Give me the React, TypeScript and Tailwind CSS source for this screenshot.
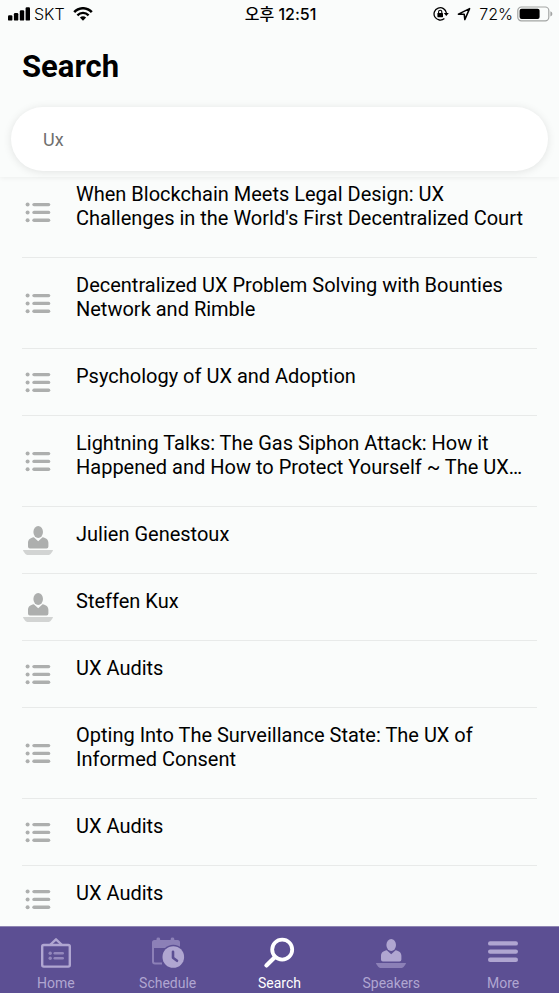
import { useState } from "react";
import type { ReactNode } from "react";

type ResultKind = "talk" | "speaker";

interface Result {
  id: number;
  kind: ResultKind;
  title: string;
}

const results: Result[] = [
  { id: 1, kind: "talk", title: "When Blockchain Meets Legal Design: UX Challenges in the World's First Decentralized Court" },
  { id: 2, kind: "talk", title: "Decentralized UX Problem Solving with Bounties Network and Rimble" },
  { id: 3, kind: "talk", title: "Psychology of UX and Adoption" },
  { id: 4, kind: "talk", title: "Lightning Talks: The Gas Siphon Attack: How it Happened and How to Protect Yourself ~ The UX…" },
  { id: 5, kind: "speaker", title: "Julien Genestoux" },
  { id: 6, kind: "speaker", title: "Steffen Kux" },
  { id: 7, kind: "talk", title: "UX Audits" },
  { id: 8, kind: "talk", title: "Opting Into The Surveillance State: The UX of Informed Consent" },
  { id: 9, kind: "talk", title: "UX Audits" },
  { id: 10, kind: "talk", title: "UX Audits" },
];

function TalkIcon() {
  return (
    <svg viewBox="0 0 32 32" className="size-8" aria-hidden="true">
      <g fill="#adafae">
        <circle cx="5.6" cy="8.6" r="2" />
        <circle cx="5.6" cy="16.4" r="2" />
        <circle cx="5.6" cy="24.2" r="2" />
        <rect x="10.3" y="6.9" width="18" height="3.4" rx="1.7" />
        <rect x="10.3" y="14.7" width="18" height="3.4" rx="1.7" />
        <rect x="10.3" y="22.5" width="18" height="3.4" rx="1.7" />
      </g>
    </svg>
  );
}

/** Speaker behind a desk, used both in the results and in the tab bar */
function SpeakerIcon({ body, desk }: { body: string; desk: string }) {
  return (
    <svg viewBox="0 0 32 32" className="size-8" aria-hidden="true">
      <ellipse cx="16.2" cy="8" rx="4.8" ry="6" fill={body} />
      <path
        d="M11.8 13.2 16.2 17.2 20.6 13.2C24 14 26.4 15.4 26.4 18.8V22.6Q26.4 24.5 24.5 24.5H7.9Q6 24.5 6 22.6V18.8C6 15.4 8.4 14 11.8 13.2Z"
        fill={body}
      />
      <path d="M1.4 26H30.6Q31.2 26 30.9 26.7L28.8 29.8Q28.1 30.9 26.8 30.9H5.2Q3.9 30.9 3.2 29.8L1.1 26.7Q.8 26 1.4 26Z" fill={desk} />
    </svg>
  );
}

function HomeIcon() {
  return (
    <svg viewBox="0 0 32 32" className="size-8" fill="none" aria-hidden="true">
      <g stroke="#b0a6d1" strokeWidth="2.4" strokeLinecap="round" strokeLinejoin="round">
        <rect x="2.2" y="8" width="27.6" height="21.6" rx="1.6" />
        <path d="M10.5 7.5 16 2.3 21.5 7.5" />
      </g>
      <g fill="#9387bc">
        <circle cx="10.2" cy="16.3" r="1.7" />
        <circle cx="10.2" cy="21.3" r="1.7" />
        <rect x="13.5" y="15" width="10.5" height="2.5" rx="1.2" />
        <rect x="13.5" y="20" width="10.5" height="2.5" rx="1.2" />
      </g>
    </svg>
  );
}

function ScheduleIcon() {
  return (
    <svg viewBox="0 0 34 32" className="h-8 w-[34px]" fill="none" aria-hidden="true">
      <path d="M1 11V5.5Q1 3 3.5 3H5.5V2Q5.5.6 7.3.6T9.1 2V3H19.7V2Q19.7.6 21.5.6T23.3 2V3H26.5Q29 3 29 5.5V11Z" fill="#8c80b7" />
      <path d="M2 10V24.5Q2 26.5 4 26.5H11" stroke="#8c80b7" strokeWidth="2" />
      <circle cx="22.3" cy="20" r="12.2" fill="#5c4f93" />
      <circle cx="22.3" cy="20" r="10.8" fill="#b0a6d1" />
      <path d="M22 14.8V20.8L26 23.8" stroke="#5c4f93" strokeWidth="2.6" strokeLinecap="round" strokeLinejoin="round" />
    </svg>
  );
}

function SearchIcon() {
  return (
    <svg viewBox="0 0 32 32" className="size-8" fill="none" stroke="#ffffff" aria-hidden="true">
      <circle cx="19.2" cy="12.6" r="10" strokeWidth="3.8" />
      <path d="M12 20.1 3.4 28.4" strokeWidth="4.2" strokeLinecap="round" />
    </svg>
  );
}

function MoreIcon() {
  return (
    <svg viewBox="0 0 32 32" className="size-8" fill="#b0a6d1" aria-hidden="true">
      <rect x="1" y="4.2" width="30" height="4.4" rx="2.2" />
      <rect x="1" y="12.4" width="30" height="4.4" rx="2.2" />
      <rect x="1" y="20.6" width="30" height="4.4" rx="2.2" />
    </svg>
  );
}

function StatusBar() {
  return (
    <div className="grid h-7 grid-cols-[1fr_auto_1fr] items-center pr-1.5 pl-2 font-['Inter','Noto_Sans_CJK_KR',sans-serif] text-base leading-none">
      <div className="flex items-center gap-1">
        <svg width="22" height="14" viewBox="0 0 22 14" aria-label="Signal">
          <rect x="0" y="8.2" width="4.4" height="5.4" rx="1.2" />
          <rect x="5.9" y="6" width="4.4" height="7.6" rx="1.2" />
          <rect x="11.8" y="3.2" width="4.4" height="10.4" rx="1.2" />
          <rect x="17.6" y="0.2" width="4.4" height="13.4" rx="1.2" />
        </svg>
        <span className="font-light">SKT</span>
        <svg width="20" height="14" viewBox="0 0 20 14" className="ml-1" fill="none" stroke="#000000" aria-label="Wi-Fi">
          <path d="M1.2 5.2C6-.1 14-.1 18.8 5.2" strokeWidth="2.5" />
          <path d="M4.4 8.4C7.6 5.1 12.4 5.1 15.6 8.4" strokeWidth="2.3" />
          <path d="M6.9 10.6Q10 8 13.1 10.6L10 13.7Z" fill="#000000" stroke="none" />
        </svg>
      </div>
      <span className="font-medium">오후 12:51</span>
      <div className="flex items-center justify-end gap-2">
        <svg width="16" height="16" viewBox="0 0 16 16" fill="none" stroke="#000000" aria-label="Rotation lock">
          <path d="M13.4 7A6.2 6.2 0 1 0 11.4 12.5" strokeWidth="1.3" />
          <path d="M10.8 6.9H15.8L13.3 9.9Z" fill="#000000" stroke="none" />
          <rect x="4.4" y="7" width="5.6" height="4.2" rx="0.6" fill="#000000" stroke="none" />
          <path d="M5.6 7V5.8A1.6 1.6 0 0 1 8.8 5.8V7" strokeWidth="1.1" />
        </svg>
        <svg width="14" height="14" viewBox="0 0 14 14" fill="none" stroke="#000000" strokeWidth="1.5" strokeLinejoin="round" aria-label="Location">
          <path d="M1.4 7.2 12.6 1.6 7.8 12.6 7.2 7.2Z" />
        </svg>
        <span className="font-light">72%</span>
        <svg width="36" height="16" viewBox="0 0 36 16" className="-ml-1" aria-label="Battery">
          <rect x="0.8" y="1" width="31" height="13.8" rx="3.6" fill="none" stroke="#a3a5a4" strokeWidth="1.2" />
          <rect x="2.6" y="2.8" width="20" height="10.2" rx="2" />
          <path d="M33.4 5.2Q35.4 6 35.4 7.9T33.4 10.6Z" fill="#a3a5a4" />
        </svg>
      </div>
    </div>
  );
}

function Tab({ label, icon, active = false }: { label: string; icon: ReactNode; active?: boolean }) {
  return (
    <a
      href={`#${label.toLowerCase()}`}
      aria-current={active ? "page" : undefined}
      className={
        active
          ? "flex flex-1 flex-col items-center text-white"
          : "flex flex-1 flex-col items-center text-[#b0a6d1]"
      }
    >
      {icon}
      <span className="mt-1 text-sm">{label}</span>
    </a>
  );
}

export default function App() {
  const [query, setQuery] = useState("Ux");

  return (
    <div className="flex h-screen flex-col bg-[#fafcfb] font-['Roboto',sans-serif] text-black">
      {/* Header stays above the scrolled results */}
      <header className="relative z-10 bg-[#fafcfb] pb-1.5 shadow-[0_1px_5px_rgba(0,0,0,0.06)]">
        <StatusBar />
        <h1 className="mt-5 px-[22px] text-[31px] leading-[38px] font-bold">Search</h1>
        <div className="mt-[21px] px-[11px]">
          <input
            type="text"
            aria-label="Search"
            value={query}
            onChange={(e) => setQuery(e.target.value)}
            className="block h-16 w-full rounded-full bg-white px-8 text-lg text-[#6f6f6f] shadow-[0_1px_8px_rgba(0,0,0,0.1)] outline-none"
          />
        </div>
      </header>

      <main className="min-h-0 flex-1 overflow-y-auto [scrollbar-width:none]">
        <ul className="-mt-2.5 px-[22px]">
          {results.map((result) => (
            <li key={result.id} className="flex items-center gap-[22px] border-b border-[#e8eae9]">
              {result.kind === "talk" ? <TalkIcon /> : <SpeakerIcon body="#adafae" desk="#d2d4d3" />}
              <p className="mt-[15px] mb-[27px] line-clamp-2 flex-1 self-start text-xl leading-6">{result.title}</p>
            </li>
          ))}
        </ul>
      </main>

      <nav className="flex h-[67px] shrink-0 border-t border-[#8f86b3] bg-[#5c4f93] pt-2.5">
        <Tab label="Home" icon={<HomeIcon />} />
        <Tab label="Schedule" icon={<ScheduleIcon />} />
        <Tab label="Search" icon={<SearchIcon />} active />
        <Tab label="Speakers" icon={<SpeakerIcon body="#b0a6d1" desk="#8c80b7" />} />
        <Tab label="More" icon={<MoreIcon />} />
      </nav>
    </div>
  );
}
